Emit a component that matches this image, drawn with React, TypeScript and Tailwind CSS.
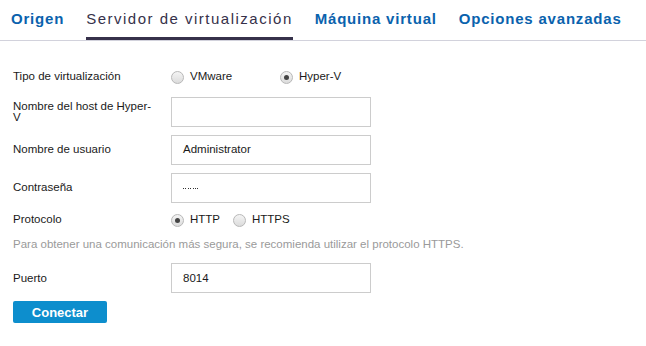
import React from "react";

function Radio({ checked }: { checked?: boolean }) {
  return (
    <span className="relative inline-flex h-[13px] w-[13px] shrink-0 items-center justify-center rounded-full border border-[#b8b8b8] bg-gradient-to-b from-[#f4f4f4] to-[#dcdcdc]">
      {checked && <span className="h-[5px] w-[5px] rounded-full bg-[#444]" />}
    </span>
  );
}

function Row({ label, children, wrap }: { label: string; children: React.ReactNode; wrap?: boolean }) {
  return (
    <div className="flex items-center">
      <div className={`w-[158px] shrink-0 ${wrap ? "pr-[18px] leading-[11px]" : "pr-[10px]"}`}>{label}</div>
      {children}
    </div>
  );
}

function Input({ value }: { value?: React.ReactNode }) {
  return (
    <div className="flex h-[30px] w-[200px] items-center border border-[#cccccc] bg-white pl-[11px]">{value}</div>
  );
}

function Dots() {
  return (
    <span className="flex items-center gap-[1.4px]">
      {[0, 1, 2, 3, 4, 5, 6].map((i) => (
        <span key={i} className="h-[1px] w-[1px] bg-[#333]" />
      ))}
    </span>
  );
}

export default function App() {
  const tabs = [
    { t: "Origen", active: false },
    { t: "Servidor de virtualización", active: true },
    { t: "Máquina virtual", active: false },
    { t: "Opciones avanzadas", active: false },
  ];
  return (
    <div className="h-[346px] w-[646px] bg-white" style={{ fontFamily: '"Liberation Sans", Arial, sans-serif' }}>
      <div className="flex h-[41px] gap-[22px] border-b border-[#d2d2dc] pl-[11px]">
        {tabs.map((x) => (
          <div
            key={x.t}
            className={`h-[40px] pt-[10px] text-[15px] leading-[18px] ${
              x.active
                ? "border-b-[3px] border-[#36314a] tracking-[1.5px] text-[#36314a]"
                : "font-semibold tracking-[0.8px] text-[#0a62ad]"
            }`}
          >
            {x.t}
          </div>
        ))}
      </div>
      <div className="flex flex-col pl-[13px] text-[11.5px] text-[#1a1a1a]">
        <div className="mt-[26px] flex h-[20px] items-center">
          <div className="w-[158px]">Tipo de virtualización</div>
          <div className="flex w-[109px] items-center gap-[6px]">
            <Radio />
            <span>VMware</span>
          </div>
          <div className="flex items-center gap-[6px]">
            <Radio checked />
            <span>Hyper-V</span>
          </div>
        </div>
        <div className="mt-[10px]">
          <Row label="Nombre del host de Hyper-V" wrap>
            <Input />
          </Row>
        </div>
        <div className="mt-[8px]">
          <Row label="Nombre de usuario">
            <Input value="Administrator" />
          </Row>
        </div>
        <div className="mt-[8px]">
          <Row label="Contraseña">
            <Input value={<Dots />} />
          </Row>
        </div>
        <div className="mt-[7px] flex h-[20px] items-center">
          <div className="w-[158px]">Protocolo</div>
          <div className="flex w-[62px] items-center gap-[6px]">
            <Radio checked />
            <span>HTTP</span>
          </div>
          <div className="flex items-center gap-[6px]">
            <Radio />
            <span>HTTPS</span>
          </div>
        </div>
        <div className="mt-[6px] text-[11.5px] text-[#9a9a9a]">
          Para obtener una comunicación más segura, se recomienda utilizar el protocolo HTTPS.
        </div>
        <div className="mt-[10px]">
          <Row label="Puerto">
            <Input value="8014" />
          </Row>
        </div>
        <button className="mt-[8px] h-[22px] w-[94px] rounded-[2px] bg-[#0d8ecd] text-[13px] font-bold text-white">
          Conectar
        </button>
      </div>
    </div>
  );
}
